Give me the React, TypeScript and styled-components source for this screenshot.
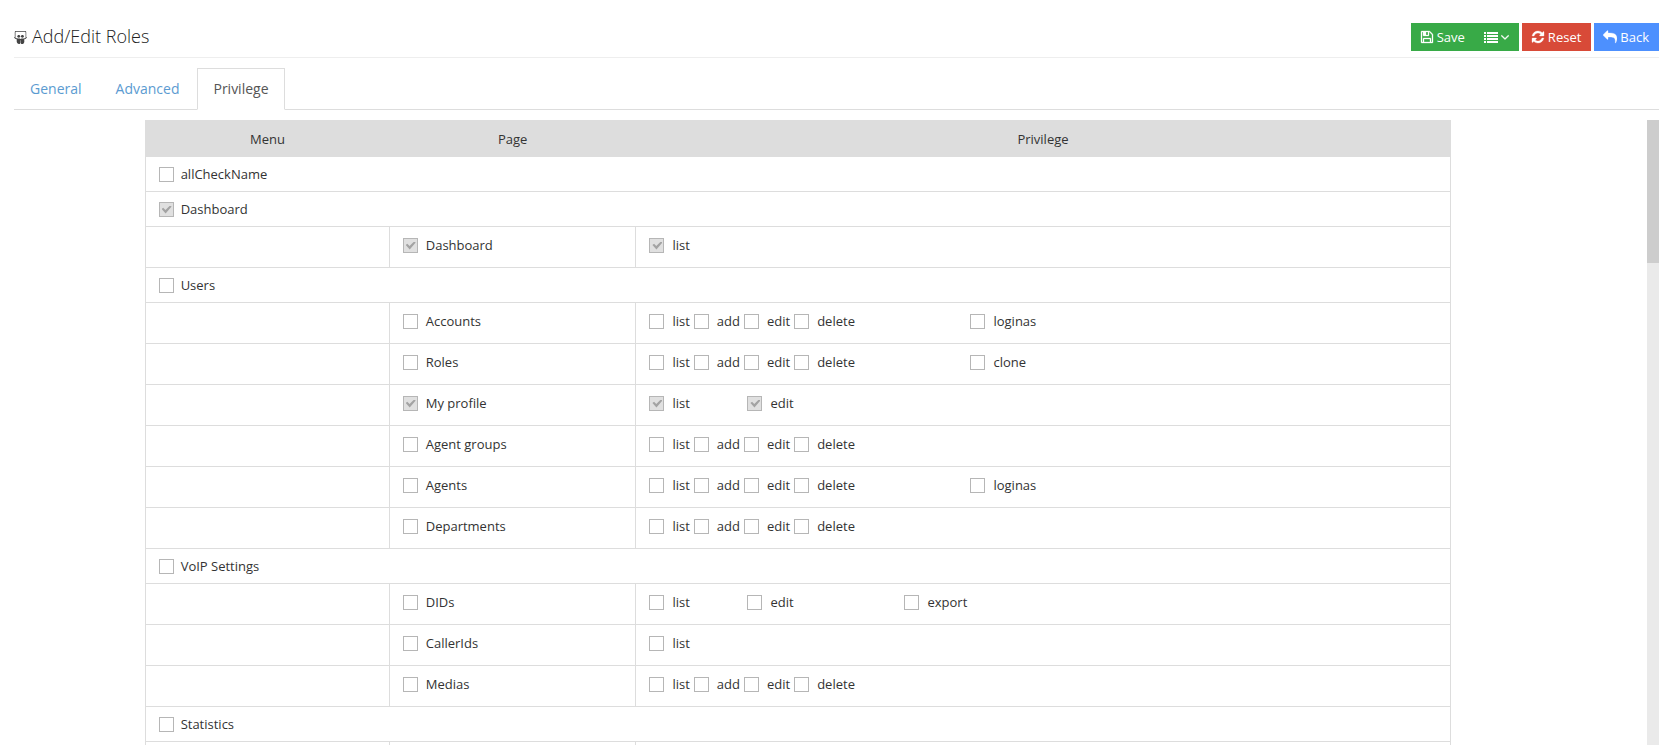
import React from 'react';
import styled, { createGlobalStyle } from 'styled-components';
import { FaSlideshare } from 'react-icons/fa';

const GlobalStyle = createGlobalStyle`
  * {
    box-sizing: border-box;
  }

  body {
    margin: 0;
    background-color: #fff;
    color: #333;
    font-family: 'Open Sans', sans-serif;
    font-size: 13px;
    line-height: 18px;
  }
`;

const Page = styled.main`
  display: flex;
  flex-direction: column;
  height: 100vh;
  padding: 16px 20px 0 14px;
  overflow: hidden;
`;

const Header = styled.header`
  display: flex;
  justify-content: space-between;
  align-items: center;
  height: 42px;
  border-bottom: 1px solid #eee;
`;

const Title = styled.h1`
  display: flex;
  align-items: center;
  gap: 5px;
  margin: 0;
  padding-bottom: 2px;
  font-size: 18px;
  font-weight: 300;
  line-height: 24px;
  color: #222;

  svg {
    width: 13px;
    height: 13px;
    margin-top: 3px;
    color: #444;
  }
`;

const Actions = styled.div`
  display: flex;
  gap: 3px;
`;

const ButtonGroup = styled.div`
  display: flex;
`;

const Button = styled.button<{ $color: string }>`
  display: flex;
  align-items: center;
  gap: 3px;
  height: 28px;
  padding: 0 10px 0 9px;
  border: 0;
  background-color: ${({ $color }) => $color};
  color: #fff;
  font-family: inherit;
  font-size: 13px;
  line-height: 18px;
  cursor: pointer;
`;

const Tabs = styled.nav`
  display: flex;
  flex-shrink: 0;
  gap: 2px;
  height: 42px;
  margin-top: 10px;
  border-bottom: 1px solid #ddd;
`;

const Tab = styled.a<{ $active?: boolean }>`
  height: 42px;
  padding: 10px 15px;
  border: 1px solid ${({ $active }) => ($active ? '#ddd' : 'transparent')};
  border-bottom-color: ${({ $active }) => ($active ? '#fff' : 'transparent')};
  color: ${({ $active }) => ($active ? '#555' : '#5b9bd1')};
  font-size: 14px;
  line-height: 20px;
  text-decoration: none;
`;

const Content = styled.div`
  display: flex;
  flex: 1;
  min-height: 0;
  margin-top: 10px;
`;

const Viewport = styled.div`
  flex: 1;
  overflow: hidden;
`;

const ScrollTrack = styled.div`
  width: 12px;
  background-color: #eaeaea;
`;

const ScrollThumb = styled.div`
  height: 143px;
  background-color: #cdcdcd;
`;

const Table = styled.table`
  width: 80%;
  margin-left: 8%;
  border: 1px solid #ddd;
  border-collapse: collapse;
  table-layout: fixed;
`;

const HeadCell = styled.th<{ $width?: string }>`
  width: ${({ $width }) => $width || 'auto'};
  height: 36px;
  padding: 0 13px;
  background-color: #ddd;
  font-weight: 400;
`;

const MenuCell = styled.td`
  height: 35px;
  padding: 8px 13px;
  border: 1px solid #ddd;
`;

const Cell = styled.td`
  height: 41px;
  padding: 9px 13px 13px;
  border: 1px solid #ddd;
`;

const PrivilegeGrid = styled.div`
  display: grid;
  grid-template-columns: 98px 157px 66px 1fr;
`;

const Slot = styled.div<{ $column: string }>`
  display: flex;
  gap: 4px;
  grid-column: ${({ $column }) => $column};
`;

const CheckLabel = styled.label`
  display: inline-flex;
  align-items: center;
  gap: 7px;
  vertical-align: top;

  ${Cell} & {
    gap: 8px;
  }
`;

const CheckBox = styled.input`
  appearance: none;
  flex-shrink: 0;
  width: 15px;
  height: 15px;
  margin: 0;
  border: 1px solid #b6b6b6;
  background-color: #fff;

  &:checked {
    background-color: #e0e0e0;
  }

  &:checked::before {
    content: '';
    display: block;
    width: 10px;
    height: 8px;
    margin: 3px 2px;
    background-color: #a3a3a3;
    clip-path: polygon(0 45%, 16% 28%, 38% 55%, 84% 0, 100% 14%, 40% 100%);
  }
`;

const icons = {
  save: 'M512 1536h768v-384h-768v384zm896 0h128v-896q0-14-10-38.5t-20-34.5l-281-281q-10-10-34-20t-39-10v416q0 40-28 68t-68 28h-576q-40 0-68-28t-28-68v-416h-128v1280h128v-416q0-40 28-68t68-28h832q40 0 68 28t28 68v416zm-384-928v-320q0-13-9.5-22.5t-22.5-9.5h-192q-13 0-22.5 9.5t-9.5 22.5v320q0 13 9.5 22.5t22.5 9.5h192q13 0 22.5-9.5t9.5-22.5zm640 32v928q0 40-28 68t-68 28h-1344q-40 0-68-28t-28-68v-1344q0-40 28-68t68-28h928q40 0 88 20t76 48l280 280q28 28 48 76t20 88z',
  list: 'M0 256h256v256H0zM384 256h1408v256H384zM0 640h256v256H0zM384 640h1408v256H384zM0 1024h256v256H0zM384 1024h1408v256H384zM0 1408h256v256H0zM384 1408h1408v256H384z',
  down: 'M1395 736q0 13-10 23l-466 466q-10 10-23 10t-23-10l-466-466q-10-10-10-23t10-23l50-50q10-10 23-10t23 10l393 393 393-393q10-10 23-10t23 10l50 50q10 10 10 23z',
  refresh: 'M1639 1056q0 5-1 7-64 268-268 434.5t-478 166.5q-146 0-282.5-55t-243.5-157l-129 129q-19 19-45 19t-45-19-19-45v-448q0-26 19-45t45-19h448q26 0 45 19t19 45-19 45l-137 137q71 66 161 102t187 36q134 0 250-65t186-179q11-17 53-117 8-23 30-23h192q13 0 22.5 9.5t9.5 22.5zm25-800v448q0 26-19 45t-45 19h-448q-26 0-45-19t-19-45 19-45l138-138q-148-137-349-137-134 0-250 65t-186 179q-11 17-53 117-8 23-30 23h-199q-13 0-22.5-9.5t-9.5-22.5v-7q65-268 270-434.5t480-166.5q146 0 284 55.5t245 156.5l130-129q19-19 45-19t45 19 19 45z',
  reply: 'M1792 1120q0 166-127 451-3 7-10.5 24t-13.5 30-13 22q-12 17-28 17-15 0-23.5-10t-8.5-25q0-9 2.5-26.5t2.5-23.5q5-68 5-123 0-101-17.5-181t-48.5-138.5-80-101-105.5-69.5-133-42.5-154-21.5-175.5-6h-224v256q0 26-19 45t-45 19-45-19l-512-512q-19-19-19-45t19-45l512-512q19-19 45-19t45 19 19 45v256h224q713 0 875 403 53 134 53 333z',
};

interface IconProps {
  name: keyof typeof icons;
  width?: number;
  viewBox?: string;
}

const Icon: React.FC<IconProps> = ({ name, width = 14, viewBox = '0 0 1792 1792' }) => (
  <svg
    width={width}
    height={14}
    viewBox={viewBox}
    fill="currentColor"
    stroke="currentColor"
    strokeWidth={name === 'list' ? 0 : 40}
    aria-hidden="true"
  >
    <path d={icons[name]} />
  </svg>
);

interface PageRow {
  name: string;
  privileges: string[];
  locked?: boolean;
}

interface MenuGroup {
  name: string;
  pages: PageRow[];
  locked?: boolean;
}

const crud = ['list', 'add', 'edit', 'delete'];

const menus: MenuGroup[] = [
  { name: 'allCheckName', pages: [] },
  {
    name: 'Dashboard',
    locked: true,
    pages: [{ name: 'Dashboard', privileges: ['list'], locked: true }],
  },
  {
    name: 'Users',
    pages: [
      { name: 'Accounts', privileges: [...crud, 'loginas'] },
      { name: 'Roles', privileges: [...crud, 'clone'] },
      { name: 'My profile', privileges: ['list', 'edit'], locked: true },
      { name: 'Agent groups', privileges: crud },
      { name: 'Agents', privileges: [...crud, 'loginas'] },
      { name: 'Departments', privileges: crud },
    ],
  },
  {
    name: 'VoIP Settings',
    pages: [
      { name: 'DIDs', privileges: ['list', 'edit', 'export'] },
      { name: 'CallerIds', privileges: ['list'] },
      { name: 'Medias', privileges: crud },
    ],
  },
  { name: 'Statistics', pages: [{ name: '', privileges: [] }] },
];

const columns: Record<string, string> = { list: '1', edit: '2', export: '3' };

const Check: React.FC<{ label: string; locked?: boolean }> = ({ label, locked }) => (
  <CheckLabel>
    <CheckBox type="checkbox" defaultChecked={locked} disabled={locked} />
    {label}
  </CheckLabel>
);

const Privileges: React.FC<{ page: PageRow }> = ({ page }) => {
  const hasCrud = page.privileges.includes('add');
  const others = hasCrud ? page.privileges.filter((p) => !crud.includes(p)) : page.privileges;

  return (
    <PrivilegeGrid>
      {hasCrud && (
        <Slot $column="1 / 3">
          {crud.map((p) => (
            <Check key={p} label={p} />
          ))}
        </Slot>
      )}
      {others.map((p) => (
        <Slot key={p} $column={columns[p] || '4'}>
          <Check label={p} locked={page.locked} />
        </Slot>
      ))}
    </PrivilegeGrid>
  );
};

const App: React.FC = () => {
  return (
    <>
      <GlobalStyle />
      <Page>
        <Header>
          <Title>
            <FaSlideshare />
            Add/Edit Roles
          </Title>
          <Actions>
            <ButtonGroup>
              <Button type="button" $color="#38aa47">
                <Icon name="save" />
                Save
              </Button>
              <Button type="button" $color="#38aa47" aria-label="More save options">
                <Icon name="list" />
                <Icon name="down" width={8} viewBox="384 0 1024 1792" />
              </Button>
            </ButtonGroup>
            <Button type="button" $color="#d84a38">
              <Icon name="refresh" />
              Reset
            </Button>
            <Button type="button" $color="#4d90fe">
              <Icon name="reply" />
              Back
            </Button>
          </Actions>
        </Header>

        <Tabs>
          <Tab href="#general">General</Tab>
          <Tab href="#advanced">Advanced</Tab>
          <Tab href="#privilege" $active>
            Privilege
          </Tab>
        </Tabs>

        <Content>
          <Viewport>
            <Table>
              <thead>
                <tr>
                  <HeadCell $width="18.7%">Menu</HeadCell>
                  <HeadCell $width="18.9%">Page</HeadCell>
                  <HeadCell>Privilege</HeadCell>
                </tr>
              </thead>
              <tbody>
                {menus.map((menu) => (
                  <React.Fragment key={menu.name}>
                    <tr>
                      <MenuCell colSpan={3}>
                        <Check label={menu.name} locked={menu.locked} />
                      </MenuCell>
                    </tr>
                    {menu.pages.map((page) => (
                      <tr key={page.name}>
                        <Cell />
                        <Cell>{page.name && <Check label={page.name} locked={page.locked} />}</Cell>
                        <Cell>
                          <Privileges page={page} />
                        </Cell>
                      </tr>
                    ))}
                  </React.Fragment>
                ))}
              </tbody>
            </Table>
          </Viewport>
          <ScrollTrack>
            <ScrollThumb />
          </ScrollTrack>
        </Content>
      </Page>
    </>
  );
};

export default App;
